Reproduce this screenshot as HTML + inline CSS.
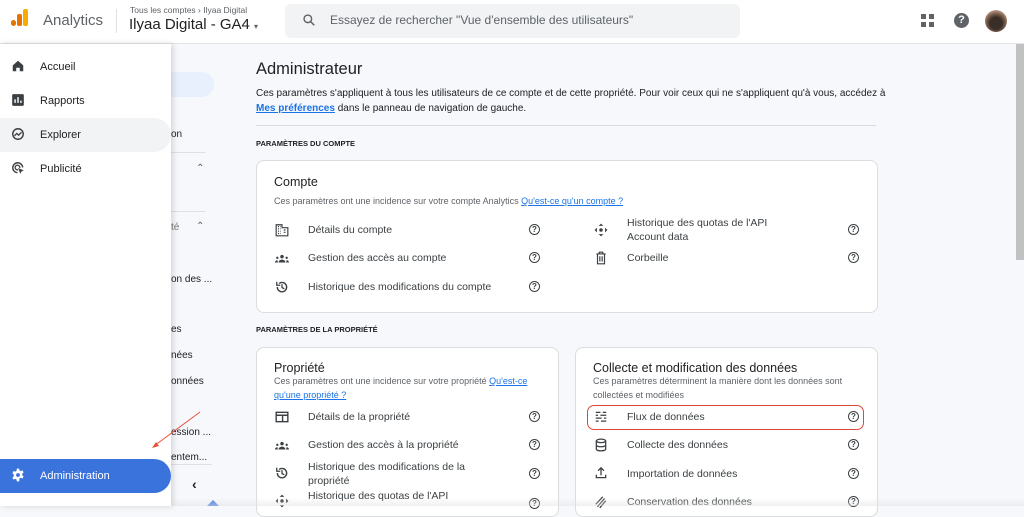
<!DOCTYPE html>
<html><head><meta charset="utf-8"><style>
*{box-sizing:border-box;margin:0;padding:0}
body{width:1024px;height:506px;overflow:hidden;background:#f6f8fb;font-family:"Liberation Sans",Arial,sans-serif;color:#202124;position:relative}
.hdr{position:absolute;left:0;top:0;width:1024px;height:44px;background:#fff;border-bottom:1px solid #e3e3e3}
.abs{position:absolute}
.drawer{position:absolute;left:0;top:44px;width:171px;height:462px;background:#fff;box-shadow:2px 0 6px rgba(0,0,0,.15);z-index:5}
.nav{position:absolute;left:0;width:171px;height:34px;font-size:11px;color:#202124;padding-left:40px;line-height:34px}
.nav svg{position:absolute;left:11px;top:9px}
.sub{position:absolute;left:171px;top:44px;width:57px;height:462px;background:#f6f8fb}
.st{position:absolute;font-size:10px;color:#202124;left:171px}
.card{position:absolute;background:#fff;border:1px solid #dadce0;border-radius:8px}
.ct{font-size:12.5px;color:#202124;position:absolute}
.cs{font-size:9px;color:#5f6368;position:absolute;line-height:14px}
.cs a{color:#1a73e8;text-decoration:underline}
.it{position:absolute;font-size:10.5px;color:#3c4043;line-height:14px}
.q{position:absolute;width:11px;height:11px;border:1.3px solid #3c4043;border-radius:50%;font-size:8px;line-height:9px;text-align:center;font-weight:bold;color:#3c4043}
.ic{position:absolute;width:14px;height:14px}
.sec{position:absolute;left:256px;font-size:7.5px;font-weight:bold;color:#202124}
</style></head><body>
<div class="hdr">
 <div class="abs" style="left:11px;top:20px;width:5px;height:6px;background:#e37400;border-radius:3px"></div>
 <div class="abs" style="left:17px;top:14px;width:5px;height:12px;background:#e37400;border-radius:2px"></div>
 <div class="abs" style="left:23px;top:9px;width:5px;height:17px;background:#f9ab00;border-radius:2px"></div>
 <div class="abs" style="left:43px;top:12px;font-size:15px;color:#5f6368">Analytics</div>
 <div class="abs" style="left:116px;top:9px;width:1px;height:24px;background:#e0e0e0"></div>
 <div class="abs" style="left:130px;top:5px;font-size:8.5px;color:#5f6368">Tous les comptes › Ilyaa Digital</div>
 <div class="abs" style="left:129px;top:16px;font-size:15px;color:#202124">Ilyaa Digital - GA4 <span style="font-size:8px;color:#5f6368">▾</span></div>
 <div class="abs" style="left:285px;top:4px;width:455px;height:34px;background:#f1f3f4;border-radius:6px"></div>
 <svg class="abs" style="left:302px;top:13px" width="14" height="14" viewBox="0 0 24 24"><circle cx="10" cy="10" r="6.5" fill="none" stroke="#5f6368" stroke-width="2.4"/><path d="M15 15l6 6" stroke="#5f6368" stroke-width="2.6"/></svg>
 <div class="abs" style="left:330px;top:13px;font-size:12px;color:#5f6368">Essayez de rechercher "Vue d'ensemble des utilisateurs"</div>
 <svg class="abs" style="left:921px;top:14px" width="13" height="13" viewBox="0 0 13 13" fill="#5f6368"><rect x="0" y="0" width="5" height="5"/><rect x="8" y="0" width="5" height="5"/><rect x="0" y="8" width="5" height="5"/><rect x="8" y="8" width="5" height="5"/></svg>
 <div class="abs" style="left:954px;top:13px;width:15px;height:15px;border-radius:50%;background:#5f6368;color:#fff;font-size:11px;font-weight:bold;text-align:center;line-height:15px">?</div>
 <div class="abs" style="left:985px;top:10px;width:22px;height:22px;border-radius:50%;background:radial-gradient(circle at 50% 60%,#3a2e28 35%,#8a6a55 60%,#c9a8a0 80%)"></div>
</div>
<div class="abs" style="left:1016px;top:44px;width:8px;height:216px;background:#c1c1c1"></div>
<div class="sub">
 <div class="abs" style="left:0;top:28px;width:43px;height:25px;background:#e8f0fe;border-radius:0 13px 13px 0"></div>
</div>
<div class="st" style="top:129px;left:171px">on</div>
<div class="abs" style="left:171px;top:152px;width:35px;height:1px;background:#e0e0e0"></div>
<div class="st" style="top:163px;left:196px;color:#5f6368">⌃</div>
<div class="abs" style="left:171px;top:211px;width:35px;height:1px;background:#e0e0e0"></div>
<div class="st" style="top:222px;color:#777">té</div><div class="st" style="top:221px;left:196px;color:#5f6368">⌃</div>
<div class="st" style="top:274px">on des ...</div>
<div class="st" style="top:324px">es</div>
<div class="st" style="top:350px">nées</div>
<div class="st" style="top:376px">onnées</div>
<div class="st" style="top:427px">ession ...</div>
<div class="abs" style="left:171px;top:464px;width:41px;height:1px;background:#e0e0e0"></div>
<div class="st" style="top:452px">entem...</div>
<div class="st" style="top:476px;left:192px;font-size:14px;font-weight:bold">‹</div>
<div class="abs" style="left:207px;top:500px;width:0;height:0;border-left:6px solid transparent;border-right:6px solid transparent;border-bottom:6px solid #4a7ee0"></div>
<svg class="abs" style="left:148px;top:410px;z-index:6" width="55" height="40"><path d="M52 2L6 36" stroke="#e8503a" stroke-width="1"/><path d="M4 38l7-2-3-4z" fill="#e8503a"/></svg>
<div class="drawer">
 <div class="nav" style="top:6px"><svg width="14" height="14" viewBox="0 0 24 24"><path d="M3 11L12 3l9 8v10h-6v-6h-6v6H3z" fill="#3c4043"/></svg>Accueil</div>
 <div class="nav" style="top:40px"><svg width="14" height="14" viewBox="0 0 24 24"><rect x="2" y="2" width="20" height="20" rx="2" fill="#3c4043"/><path d="M7 17v-6M12 17V7M17 17v-4" stroke="#fff" stroke-width="2.4"/></svg>Rapports</div>
 <div class="nav" style="top:74px;background:#f1f3f4;border-radius:0 17px 17px 0"><svg width="14" height="14" viewBox="0 0 24 24"><circle cx="12" cy="12" r="9" fill="none" stroke="#3c4043" stroke-width="2.4"/><path d="M6 15l4-4 3 3 5-5" fill="none" stroke="#3c4043" stroke-width="2.2"/></svg>Explorer</div>
 <div class="nav" style="top:108px"><svg width="14" height="14" viewBox="0 0 24 24"><path d="M20 11A8.5 8.5 0 1 0 11 20" fill="none" stroke="#3c4043" stroke-width="2.4"/><path d="M15 12A4 4 0 1 0 12 15" fill="none" stroke="#3c4043" stroke-width="2.2"/><path d="M12 12l10 4-4 2-2 4z" fill="#3c4043"/></svg>Publicité</div>
 <div class="nav" style="top:415px;background:#3a73dc;color:#fff;border-radius:0 17px 17px 0"><svg width="14" height="14" viewBox="0 0 24 24"><path d="M10 1h4l.6 3.2 2 1.1 3-1.2 2 3.4-2.4 2.1v2.8l2.4 2.1-2 3.4-3-1.2-2 1.1L14 23h-4l-.6-3.2-2-1.1-3 1.2-2-3.4 2.4-2.1v-2.8L2.4 8.5l2-3.4 3 1.2 2-1.1z" fill="#fff"/><circle cx="12" cy="12" r="3.3" fill="#3a73dc"/></svg>Administration</div>
</div>

<div class="abs" style="left:256px;top:60px;font-size:16.5px;color:#202124">Administrateur</div>
<div class="abs" style="left:256px;top:86px;font-size:10px;line-height:15px;color:#202124;width:630px">Ces paramètres s'appliquent à tous les utilisateurs de ce compte et de cette propriété. Pour voir ceux qui ne s'appliquent qu'à vous, accédez à <a style="color:#1a73e8;font-weight:bold;text-decoration:underline">Mes préférences</a> dans le panneau de navigation de gauche.</div>
<div class="abs" style="left:256px;top:125px;width:620px;height:1px;background:#dadce0"></div>
<div class="sec" style="top:139px">PARAMÈTRES DU COMPTE</div>

<div class="card" style="left:256px;top:160px;width:622px;height:153px">
 <div class="ct" style="left:17px;top:14px">Compte</div>
 <div class="cs" style="left:17px;top:33px">Ces paramètres ont une incidence sur votre compte Analytics <a>Qu'est-ce qu'un compte ?</a></div>
 <svg class="ic" style="left:18px;top:62px" viewBox="0 0 24 24"><path d="M2 22V3h10v5h10v14z" fill="none" stroke="#3c4043" stroke-width="2"/><path d="M5 6h2M9 6h1M5 10h2M9 10h1M5 14h2M9 14h1M5 18h2M9 18h1M15 12h3M15 16h3" stroke="#3c4043" stroke-width="2"/></svg>
 <div class="it" style="left:51px;top:62px">Détails du compte</div><div class="q" style="left:272px;top:63px">?</div>
 <svg class="ic" style="left:18px;top:91px" viewBox="0 0 24 24" fill="#3c4043"><circle cx="12" cy="8" r="3"/><circle cx="4" cy="10" r="2"/><circle cx="20" cy="10" r="2"/><path d="M6 18c0-3 3-5 6-5s6 2 6 5zM0 18c0-2 2-4 4-4l1 4zM24 18c0-2-2-4-4-4l-1 4z"/></svg>
 <div class="it" style="left:51px;top:90px">Gestion des accès au compte</div><div class="q" style="left:272px;top:91px">?</div>
 <svg class="ic" style="left:18px;top:119px" viewBox="0 0 24 24"><path d="M4 12a8 8 0 1 0 3-6" fill="none" stroke="#3c4043" stroke-width="2.4"/><path d="M3 3v6h6" fill="none" stroke="#3c4043" stroke-width="2.2"/><path d="M12 7v6l4 2" fill="none" stroke="#3c4043" stroke-width="2.2"/></svg>
 <div class="it" style="left:51px;top:119px">Historique des modifications du compte</div><div class="q" style="left:272px;top:120px">?</div>
 <svg class="ic" style="left:337px;top:62px" viewBox="0 0 24 24" fill="#3c4043"><path d="M12 1l4 4H8zM12 23l-4-4h8zM1 12l4-4v8zM23 12l-4 4V8z"/><circle cx="12" cy="12" r="3"/></svg>
 <div class="it" style="left:370px;top:55px">Historique des quotas de l'API<br>Account data</div><div class="q" style="left:591px;top:63px">?</div>
 <svg class="ic" style="left:337px;top:90px" viewBox="0 0 24 24"><path d="M4 5h16M9 5V2h6v3M6 5v17h12V5M10 9v9M14 9v9" fill="none" stroke="#3c4043" stroke-width="2"/></svg>
 <div class="it" style="left:370px;top:90px">Corbeille</div><div class="q" style="left:591px;top:91px">?</div>
</div>

<div class="sec" style="top:325px">PARAMÈTRES DE LA PROPRIÉTÉ</div>

<div class="card" style="left:256px;top:347px;width:303px;height:170px">
 <div class="ct" style="left:17px;top:13px">Propriété</div>
 <div class="cs" style="left:17px;top:26px;width:270px">Ces paramètres ont une incidence sur votre propriété <a>Qu'est-ce qu'une propriété ?</a></div>
 <svg class="ic" style="left:18px;top:62px" viewBox="0 0 24 24"><rect x="2" y="4" width="20" height="16" fill="none" stroke="#3c4043" stroke-width="2.4"/><path d="M2 9h20M13 9v11" stroke="#3c4043" stroke-width="2.4"/></svg>
 <div class="it" style="left:51px;top:62px">Détails de la propriété</div><div class="q" style="left:272px;top:63px">?</div>
 <svg class="ic" style="left:18px;top:91px" viewBox="0 0 24 24" fill="#3c4043"><circle cx="12" cy="8" r="3"/><circle cx="4" cy="10" r="2"/><circle cx="20" cy="10" r="2"/><path d="M6 18c0-3 3-5 6-5s6 2 6 5zM0 18c0-2 2-4 4-4l1 4zM24 18c0-2-2-4-4-4l-1 4z"/></svg>
 <div class="it" style="left:51px;top:90px">Gestion des accès à la propriété</div><div class="q" style="left:272px;top:91px">?</div>
 <svg class="ic" style="left:18px;top:118px" viewBox="0 0 24 24"><path d="M4 12a8 8 0 1 0 3-6" fill="none" stroke="#3c4043" stroke-width="2.4"/><path d="M3 3v6h6" fill="none" stroke="#3c4043" stroke-width="2.2"/><path d="M12 7v6l4 2" fill="none" stroke="#3c4043" stroke-width="2.2"/></svg>
 <div class="it" style="left:51px;top:112px">Historique des modifications de la<br>propriété</div><div class="q" style="left:272px;top:120px">?</div>
 <svg class="ic" style="left:18px;top:146px" viewBox="0 0 24 24" fill="#3c4043"><path d="M12 1l4 4H8zM12 23l-4-4h8zM1 12l4-4v8zM23 12l-4 4V8z"/><circle cx="12" cy="12" r="3"/></svg>
 <div class="it" style="left:51px;top:141px">Historique des quotas de l'API</div><div class="q" style="left:272px;top:150px">?</div>
</div>

<div class="card" style="left:575px;top:347px;width:303px;height:170px">
 <div class="ct" style="left:17px;top:13px">Collecte et modification des données</div>
 <div class="cs" style="left:17px;top:26px;width:270px">Ces paramètres déterminent la manière dont les données sont collectées et modifiées</div>
 <div class="abs" style="left:11px;top:57px;width:277px;height:25px;border:1.3px solid #e0483a;border-radius:7px"></div>
 <svg class="ic" style="left:18px;top:62px" viewBox="0 0 24 24" stroke="#3c4043" stroke-width="2.2"><path d="M3 4h8M15 4h6M3 9h4M11 9h10M3 14h10M17 14h4M3 19h5M12 19h9"/></svg>
 <div class="it" style="left:51px;top:62px">Flux de données</div><div class="q" style="left:272px;top:63px">?</div>
 <svg class="ic" style="left:18px;top:90px" viewBox="0 0 24 24" fill="none" stroke="#3c4043" stroke-width="2.2"><ellipse cx="12" cy="5" rx="8" ry="3"/><path d="M4 5v14c0 2 4 3 8 3s8-1 8-3V5M4 12c0 2 4 3 8 3s8-1 8-3"/></svg>
 <div class="it" style="left:51px;top:90px">Collecte des données</div><div class="q" style="left:272px;top:91px">?</div>
 <svg class="ic" style="left:18px;top:118px" viewBox="0 0 24 24" fill="none" stroke="#3c4043" stroke-width="2.2"><path d="M12 16V3M7 8l5-5 5 5M4 15v5h16v-5"/></svg>
 <div class="it" style="left:51px;top:119px">Importation de données</div><div class="q" style="left:272px;top:120px">?</div>
 <svg class="ic" style="left:18px;top:147px" viewBox="0 0 24 24" fill="none" stroke="#3c4043" stroke-width="2.2"><path d="M6 20L18 6M10 22l10-12M3 16L15 3"/></svg>
 <div class="it" style="left:51px;top:147px">Conservation des données</div><div class="q" style="left:272px;top:148px">?</div>
</div>
<div class="abs" style="left:171px;top:498px;width:853px;height:8px;background:linear-gradient(rgba(255,255,255,0),rgba(225,225,225,.5))"></div>
</body></html>
